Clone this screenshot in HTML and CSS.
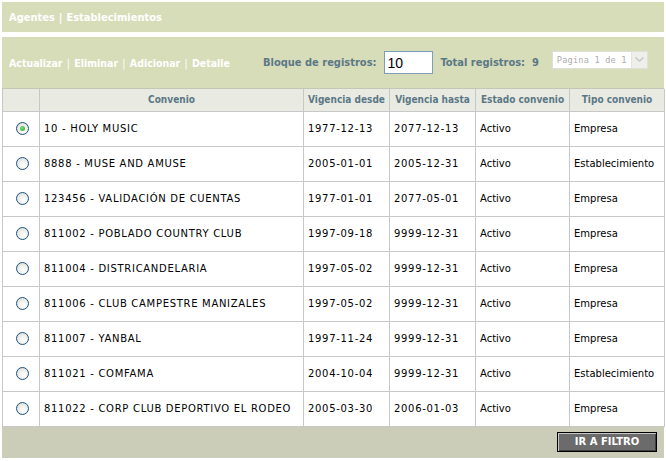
FILE: index.html
```html
<!DOCTYPE html>
<html>
<head>
<meta charset="utf-8">
<link rel="stylesheet" href="styles.css">
</head>
<body>
<div class="page">
  <div class="topbar"><span>Agentes</span> | <span>Establecimientos</span></div>
  <div class="toolbar">
    <div class="actions">Actualizar <span class="sep">|</span> Eliminar <span class="sep">|</span> Adicionar <span class="sep">|</span> Detalle</div>
    <div class="block">
      <span class="lbl">Bloque de registros:</span>
      <span class="inp">10</span>
      <span class="lbl total">Total registros:&nbsp; 9</span>
      <span class="sel"><span class="selt">Pagina 1 de 1</span><span class="selb"><svg width="11" height="7" viewBox="0 0 11 7"><path d="M1.5 1.5 L5.5 5 L9.5 1.5" fill="none" stroke="#c8c8c8" stroke-width="1.6"/></svg></span></span>
    </div>
  </div>
  <table class="grid">
    <colgroup>
      <col class="c0"><col class="c1"><col class="c2"><col class="c3"><col class="c4"><col class="c5">
    </colgroup>
    <thead>
      <tr><th></th><th>Convenio</th><th>Vigencia desde</th><th>Vigencia hasta</th><th>Estado convenio</th><th>Tipo convenio</th></tr>
    </thead>
    <tbody>
      <tr><td class="rc"><span class="radio on"></span></td><td class="w">10 - HOLY MUSIC</td><td class="w">1977-12-13</td><td class="w">2077-12-13</td><td>Activo</td><td>Empresa</td></tr>
      <tr><td class="rc"><span class="radio"></span></td><td class="w">8888 - MUSE AND AMUSE</td><td class="w">2005-01-01</td><td class="w">2005-12-31</td><td>Activo</td><td>Establecimiento</td></tr>
      <tr><td class="rc"><span class="radio"></span></td><td class="w">123456 - VALIDACIÓN DE CUENTAS</td><td class="w">1977-01-01</td><td class="w">2077-05-01</td><td>Activo</td><td>Empresa</td></tr>
      <tr><td class="rc"><span class="radio"></span></td><td class="w">811002 - POBLADO COUNTRY CLUB</td><td class="w">1997-09-18</td><td class="w">9999-12-31</td><td>Activo</td><td>Empresa</td></tr>
      <tr><td class="rc"><span class="radio"></span></td><td class="w">811004 - DISTRICANDELARIA</td><td class="w">1997-05-02</td><td class="w">9999-12-31</td><td>Activo</td><td>Empresa</td></tr>
      <tr><td class="rc"><span class="radio"></span></td><td class="w">811006 - CLUB CAMPESTRE MANIZALES</td><td class="w">1997-05-02</td><td class="w">9999-12-31</td><td>Activo</td><td>Empresa</td></tr>
      <tr><td class="rc"><span class="radio"></span></td><td class="w">811007 - YANBAL</td><td class="w">1997-11-24</td><td class="w">9999-12-31</td><td>Activo</td><td>Empresa</td></tr>
      <tr><td class="rc"><span class="radio"></span></td><td class="w">811021 - COMFAMA</td><td class="w">2004-10-04</td><td class="w">9999-12-31</td><td>Activo</td><td>Establecimiento</td></tr>
      <tr><td class="rc"><span class="radio"></span></td><td class="w">811022 - CORP CLUB DEPORTIVO EL RODEO</td><td class="w">2005-03-30</td><td class="w">2006-01-03</td><td>Activo</td><td>Empresa</td></tr>
    </tbody>
  </table>
  <div class="footer"><span class="btn">IR A FILTRO</span></div>
</div>
</body>
</html>
```
FILE: styles.css
```css
html, body { margin: 0; padding: 0; background: #fff; }
.page { padding: 2px; width: 662px; font-family: "DejaVu Sans", Verdana, sans-serif; }
.topbar {
  height: 30px; background: #d8ddb9; color: #fff;
  font: bold 11px "DejaVu Sans Condensed", "DejaVu Sans", sans-serif;
  display: flex; align-items: center; gap: 4px; padding-left: 7px;
  box-sizing: border-box;
}
.toolbar {
  margin-top: 5px; height: 52px; background: #d8ddb9;
  border-bottom: 1px solid #c4c6b6; box-sizing: border-box;
  display: flex; align-items: center; padding-left: 7px;
}
.actions { color: #fff; font: bold 10.5px "DejaVu Sans Condensed", "DejaVu Sans", sans-serif; white-space: nowrap; }
.actions .sep { font-weight: normal; margin: 0 1px; }
.block { display: flex; align-items: center; margin-left: 33px; }
.lbl { color: #5b7886; font: bold 11px "DejaVu Sans Condensed", "DejaVu Sans", sans-serif; white-space: nowrap; }
.inp {
  margin-left: 7px; width: 49px; height: 23px; box-sizing: border-box;
  border: 1px solid #7f9db9; background: #fff; color: #000;
  font: 14px "Liberation Sans", Arial, sans-serif; display: flex; align-items: center; padding-left: 3px;
}
.total { margin-left: 8px; }
.sel {
  margin-left: 13px; width: 96px; height: 18px; box-sizing: border-box; margin-top: -6px;
  border: 1px solid #e0e0d8; background: #fff; display: flex; align-items: stretch;
}
.selt { flex: 1; color: #acacac; font: 8.6px "DejaVu Sans Mono", monospace; display: flex; align-items: center; padding-left: 4px; letter-spacing: 0.2px; white-space: nowrap; }
.selb { width: 15px; background: #eeeeea; border-left: 1px solid #e4e4dc; display: flex; align-items: center; justify-content: center; }
.grid {
  border-collapse: collapse; width: 662px; table-layout: fixed;
  font: 10px "DejaVu Sans", Verdana, sans-serif; color: #000;
}
.c0 { width: 37px; } .c1 { width: 264px; } .c2 { width: 86px; } .c3 { width: 86px; } .c4 { width: 94px; } .c5 { width: 95px; }
.grid th {
  height: 22px; background: #e9ebe3; color: #5b7886; border: 1px solid #c8c8c8; padding: 0;
  font: bold 10px "DejaVu Sans Condensed", "DejaVu Sans", sans-serif; text-align: center;
  box-sizing: border-box; border-top: none;
}
.grid td {
  height: 35px; border: 1px solid #c8c8c8; padding: 0 0 0 4px; white-space: nowrap; overflow: hidden;
  box-sizing: border-box; letter-spacing: 0;
}
.grid td.w { letter-spacing: 0.7px; }
.grid td.rc { padding: 0; text-align: center; }
.radio {
  display: inline-block; width: 11px; height: 11px; border-radius: 50%;
  border: 1px solid #1d5180; background: radial-gradient(circle at 60% 65%, #ffffff 0%, #f0f0ec 45%, #d6d6ce 100%);
  vertical-align: middle; position: relative; margin-left: 2px;
}
.radio.on::after {
  content: ""; position: absolute; left: 3px; top: 3px; width: 5px; height: 5px; border-radius: 50%;
  background: radial-gradient(circle at 40% 40%, #7ee07a, #21a121);
}
.footer {
  height: 31px; background: #cbcdb9; display: flex; justify-content: flex-end; align-items: flex-start;
  padding-right: 7px; box-sizing: border-box; padding-top: 5px;
}
.btn {
  width: 100px; height: 20px; box-sizing: border-box; background: #6b6b6b; color: #fff;
  border: 1px solid #000; box-shadow: inset 1px 1px 0 #c8c8c8, inset -1px -1px 0 #404040;
  font: bold 10px "DejaVu Sans", Verdana, sans-serif; display: flex; align-items: center; justify-content: center;
}
```
